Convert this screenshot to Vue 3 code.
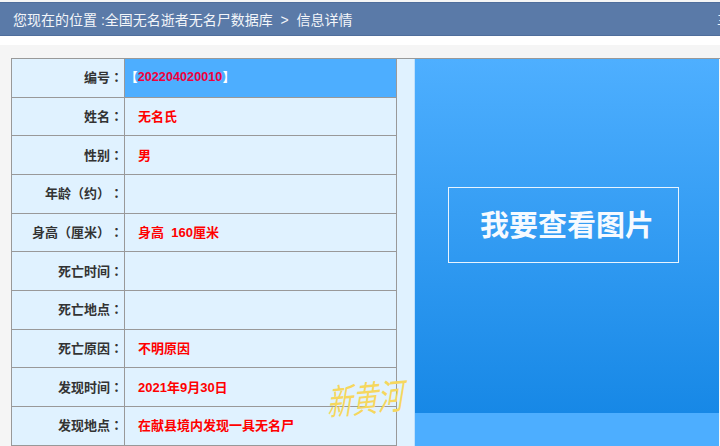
<template>
  <div class="page">
    <div class="crumb">
      <span>您现在的位置 :全国无名逝者无名尸数据库 &nbsp;&gt;&nbsp; 信息详情</span>
      <span class="crumb-end">三</span>
    </div>
    <div class="gap"></div>
    <div class="content">
      <div class="detail">
        <div class="table">
          <div v-for="(row, i) in rows" :key="i" class="row">
            <div class="label">{{ row.label }}<span v-if="row.label" class="punct">：</span></div>
            <div class="value" :class="{ num: row.num }">
              <template v-if="row.num"><span class="punct bracket">【</span>{{ row.value }}<span class="punct bracket">】</span></template>
              <template v-else>{{ row.value }}</template>
            </div>
          </div>
        </div>
      </div>
      <div class="side">
        <div class="side-main">
          <a class="btn">我要查看图片</a>
        </div>
        <div class="side-foot"></div>
      </div>
      <div class="mark">新黄河</div>
    </div>
  </div>
</template>

<script setup>
const rows = [
  { label: '编号', value: '202204020010', num: true },
  { label: '姓名', value: '无名氏' },
  { label: '性别', value: '男' },
  { label: '年龄（约）', value: '' },
  { label: '身高（厘米）', value: '身高  160厘米' },
  { label: '死亡时间', value: '' },
  { label: '死亡地点', value: '' },
  { label: '死亡原因', value: '不明原因' },
  { label: '发现时间', value: '2021年9月30日' },
  { label: '发现地点', value: '在献县境内发现一具无名尸' },
  { label: '', value: '' },
]
</script>

<style scoped>
.page {
  position: relative;
  width: 720px;
  height: 446px;
  overflow: hidden;
  background: #f5f5f5;
  font-family: "Liberation Sans", "Noto Sans CJK SC", sans-serif;
}
.crumb {
  display: flex;
  justify-content: space-between;
  align-items: center;
  height: 34px;
  margin-top: 2px;
  padding-left: 13px;
  box-sizing: border-box;
  background: #5a7aa8;
  border-top: 1px solid #4f6e9c;
  border-bottom: 1px solid #4f6e9c;
  color: #f2f5f9;
  font-size: 14px;
  white-space: pre;
}
.crumb-end {
  width: 3px;
  overflow: hidden;
  font-size: 12px;
}
.gap {
  height: 9px;
  background: #fff;
}
.content {
  position: relative;
  display: flex;
  align-items: flex-start;
  margin: 13px 0 0 11px;
  border-top: 1px solid #999;
}
.detail {
  width: 403px;
  height: 400px;
  background: #e0f2ff;
}
.table {
  width: 386px;
  border-left: 1px solid #999;
  border-right: 1px solid #999;
  box-sizing: border-box;
}
.row {
  display: grid;
  grid-template-columns: 113px 1fr;
  height: 38.67px;
  box-sizing: border-box;
  border-bottom: 1px solid #999;
  font-size: 13px;
  font-weight: 700;
}
.label {
  display: flex;
  align-items: center;
  justify-content: flex-end;
  padding-right: 1px;
  padding-bottom: 2px;
  border-right: 1px solid #999;
  color: #333;
}
.punct {
  font-family: "Noto Sans CJK TC", sans-serif;
}
.value {
  display: flex;
  align-items: center;
  padding-left: 13px;
  padding-bottom: 2px;
  color: #f00;
  white-space: pre;
}
.value.num {
  padding-left: 0;
  background: #4daeff;
  color: #f0003c;
  font-size: 12.7px;
}
.bracket {
  color: #fff;
}
.side {
  width: 305px;
  height: 387px;
  box-sizing: border-box;
  border-left: 1px solid #bfe0fc;
}
.side-main {
  display: flex;
  align-items: center;
  justify-content: center;
  height: 354px;
  box-sizing: border-box;
  padding-right: 7px;
  padding-bottom: 22px;
  background: linear-gradient(#4eafff, #1788e6);
}
.side-foot {
  height: 33px;
  background: #4daeff;
}
.btn {
  display: flex;
  align-items: center;
  justify-content: center;
  width: 231px;
  height: 76px;
  box-sizing: border-box;
  padding-left: 7px;
  padding-bottom: 4px;
  border: 1px solid #e8f4ff;
  color: #f6faff;
  font-size: 29px;
  font-weight: 700;
}
.mark {
  position: absolute;
  left: 319px;
  top: 320px;
  color: #f6d75e;
  font-size: 25px;
  line-height: 40px;
  transform: skewX(-12deg) scaleY(1.45) rotate(-4deg);
}
</style>
